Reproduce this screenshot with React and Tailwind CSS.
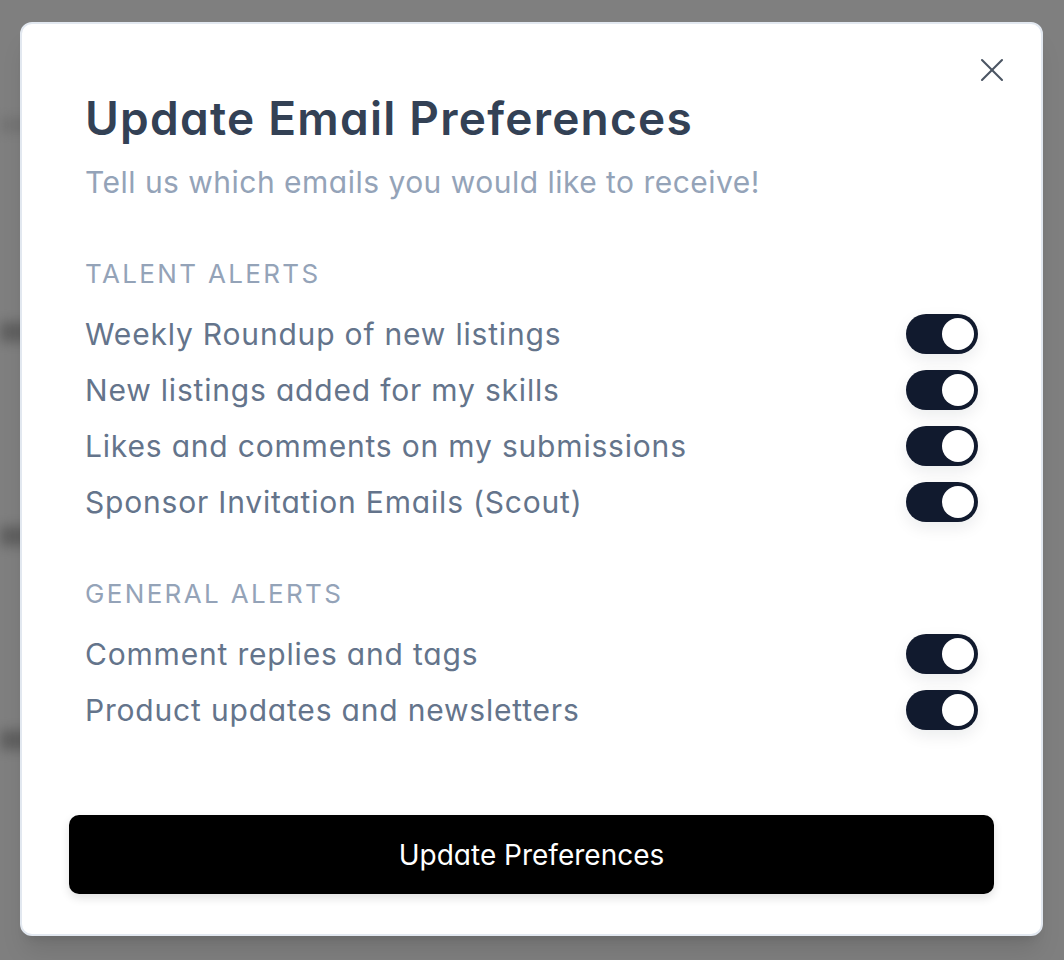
import { X } from 'lucide-react';

const talentAlerts = [
  'Weekly Roundup of new listings',
  'New listings added for my skills',
  'Likes and comments on my submissions',
  'Sponsor Invitation Emails (Scout)',
];

const generalAlerts = ['Comment replies and tags', 'Product updates and newsletters'];

function Toggle() {
  return (
    <div className="flex h-[40px] w-[72px] items-center justify-end rounded-full bg-[#111a2e] p-[4px] shadow-[0_6px_16px_rgba(15,23,42,0.08)]">
      <div className="h-[32px] w-[32px] rounded-full bg-white" />
    </div>
  );
}

function Row({ label }) {
  return (
    <div className="flex h-[56px] items-center justify-between">
      <span className="text-[30px] leading-none tracking-[0.027em] text-[#64748b]">{label}</span>
      <Toggle />
    </div>
  );
}

function SectionTitle({ children }) {
  return (
    <div className="flex h-[32px] items-center text-[26px] uppercase leading-none tracking-[0.09em] text-[#94a3b8]">
      {children}
    </div>
  );
}

export default function App() {
  return (
    <div className="relative h-[960px] w-[1064px] overflow-hidden bg-[#7f7f7f] font-['Inter',sans-serif] [font-feature-settings:'cv11']">
      {/* blurred page behind the overlay */}
      <div className="absolute left-0 top-0 flex w-[200px] flex-col pt-[118px] opacity-60 blur-[6px]">
        <div className="h-[14px] w-[160px] bg-[#6a6a6a]" />
        <div className="mt-[190px] h-[20px] w-[160px] bg-[#4a4a4a]" />
        <div className="mt-[184px] h-[20px] w-[160px] bg-[#4a4a4a]" />
        <div className="mt-[184px] h-[20px] w-[160px] bg-[#4a4a4a]" />
      </div>

      <div className="relative pl-[20px] pt-[22px]">
        <div className="relative flex h-[914px] w-[1023px] flex-col rounded-[12px] border-2 border-[#e2e8f0] bg-white px-[63px] pt-[66px] shadow-xl">
          <button className="absolute right-[29px] top-[26px] text-[#4b5563]">
            <X size={40} strokeWidth={1.25} />
          </button>

          <h1 className="flex h-[56px] items-center text-[46px] font-semibold leading-none tracking-[0.027em] text-[#334155]">
            Update Email Preferences
          </h1>
          <p className="mt-[16px] flex h-[40px] items-center text-[30px] leading-none tracking-[0.016em] text-[#94a3b8]">
            Tell us which emails you would like to receive!
          </p>

          <div className="mt-[56px]">
            <SectionTitle>Talent Alerts</SectionTitle>
            <div className="mt-[16px] flex flex-col">
              {talentAlerts.map((a) => (
                <Row key={a} label={a} />
              ))}
            </div>
          </div>

          <div className="mt-[48px]">
            <SectionTitle>General Alerts</SectionTitle>
            <div className="mt-[16px] flex flex-col">
              {generalAlerts.map((a) => (
                <Row key={a} label={a} />
              ))}
            </div>
          </div>

          <button className="-mx-[16px] mt-[77px] flex h-[79px] items-center justify-center rounded-[10px] bg-black text-[28px] text-white shadow-[0_4px_10px_rgba(0,0,0,0.12)]">
            Update Preferences
          </button>
        </div>
      </div>
    </div>
  );
}
